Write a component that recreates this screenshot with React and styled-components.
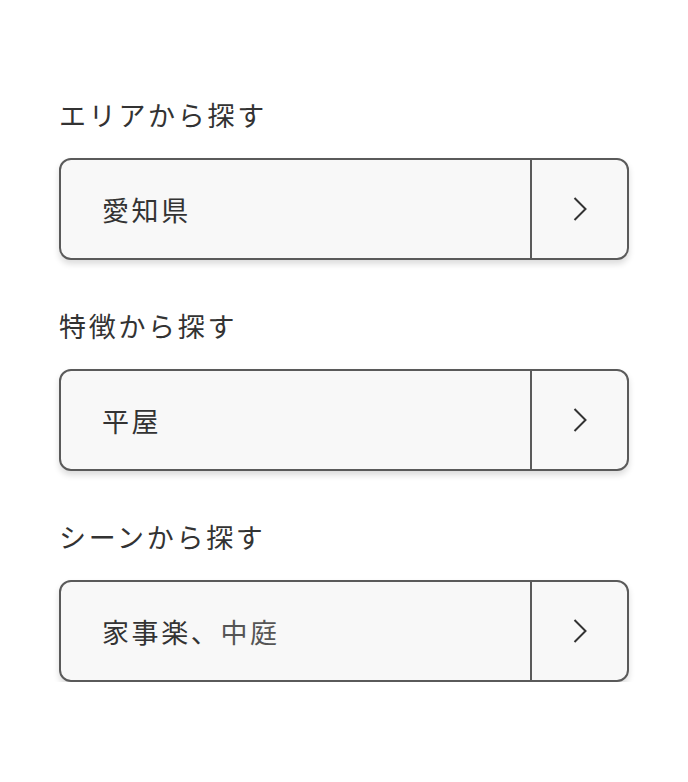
import React from "react";
import styled, { createGlobalStyle } from "styled-components";

const Global = createGlobalStyle`
  body {
    margin: 0;
    background: #fff;
    font-family: "Noto Sans CJK JP", "Noto Sans", sans-serif;
    color: #333;
  }
`;

const Page = styled.div`
  padding: 97px 59px 0;
  display: flex;
  flex-direction: column;
  gap: 48px;
`;

const Section = styled.section`
  display: flex;
  flex-direction: column;
  gap: 25px;
`;

const Label = styled.div`
  font-size: 27px;
  line-height: 36px;
  letter-spacing: 2.7px;
  color: #333;
`;

const Selector = styled.button`
  display: flex;
  width: 570px;
  height: 102px;
  padding: 0;
  box-sizing: border-box;
  border: 2px solid #5a5a5a;
  border-radius: 12px;
  background: #f8f8f8;
  box-shadow: 0 4px 6px rgba(0, 0, 0, 0.14);
  font-family: inherit;
  cursor: pointer;
  overflow: hidden;
`;

const Value = styled.div`
  flex: 1;
  display: flex;
  align-items: center;
  padding-left: 41px;
  font-size: 27px;
  letter-spacing: 2.6px;
  color: #333;
`;

const Muted = styled.span`
  color: #555;
`;

const Arrow = styled.div`
  width: 95px;
  flex-shrink: 0;
  border-left: 2px solid #5a5a5a;
  display: flex;
  align-items: center;
  justify-content: center;
`;

const Chevron = () => (
  <svg width="14" height="24" viewBox="0 0 14 24" fill="none">
    <path d="M1.5 1 L12.5 12 L1.5 23" stroke="#333" strokeWidth="2" />
  </svg>
);

const items = [
  { label: "エリアから探す", value: "愛知県" },
  { label: "特徴から探す", value: "平屋" },
  { label: "シーンから探す", value: "家事楽、", muted: "中庭" },
];

export default function App() {
  return (
    <>
      <Global />
      <Page>
        {items.map((it) => (
          <Section key={it.label}>
            <Label>{it.label}</Label>
            <Selector>
              <Value>
                {it.value}
                {it.muted && <Muted>{it.muted}</Muted>}
              </Value>
              <Arrow>
                <Chevron />
              </Arrow>
            </Selector>
          </Section>
        ))}
      </Page>
    </>
  );
}
